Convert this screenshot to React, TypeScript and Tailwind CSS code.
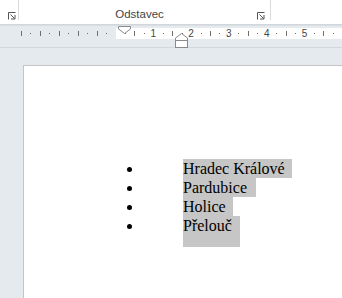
const ZERO = 115.5;
const STEP = 9.45;

const Launcher = () => (
  <svg width="8" height="8" viewBox="0 0 8 8" className="text-[#555]">
    <path d="M0.5 7.5V0.5H7.5" fill="none" stroke="currentColor" strokeWidth="1" />
    <path d="M2.5 2.5L6.5 6.5" fill="none" stroke="currentColor" strokeWidth="1" />
    <path d="M3 7H7V3" fill="none" stroke="currentColor" strokeWidth="1" />
  </svg>
);

const ticks = Array.from({ length: 34 }, (_, i) => i - 10).filter((k) => k !== 0);

const Ruler = () => (
  <div className="relative h-[22px] border-b border-[#d3d8dd]">
    {/* bílý pruh pravítka */}
    <div className="ml-[116px] mt-[2px] h-[11px] bg-white" />
    {ticks.map((k) => {
      const x = ZERO + k * STEP;
      if (k > 0 && k % 4 === 0)
        return (
          <span
            key={k}
            className="absolute top-[1px] -translate-x-1/2 text-[10px] leading-[13px] text-[#444] font-['Liberation_Sans',sans-serif]"
            style={{ left: x }}
          >
            {k / 4}
          </span>
        );
      if (k % 2 === 0)
        return <span key={k} className="absolute top-[5px] h-[5px] w-px bg-[#6d6d6d]" style={{ left: Math.round(x) }} />;
      return <span key={k} className="absolute top-[7px] h-px w-px bg-[#6d6d6d]" style={{ left: Math.round(x) }} />;
    })}
    {/* odsazení prvního řádku */}
    <svg className="absolute left-[118px] top-0" width="14" height="9" viewBox="0 0 14 9">
      <path d="M0.5 0.5H12.5V3L6.5 7.5L0.5 3Z" fill="white" stroke="#8a8a8a" />
    </svg>
    {/* předsazení */}
    <svg className="absolute left-[175px] top-[7px]" width="14" height="16" viewBox="0 0 14 16">
      <path d="M6.5 0.5L12.5 5V7.5H0.5V5Z" fill="white" stroke="#8a8a8a" />
      <rect x="0.5" y="7.5" width="12" height="7" fill="white" stroke="#8a8a8a" />
    </svg>
  </div>
);

const items = [
  { text: "Hradec Králové", w: "w-[109px]", h: "h-[19px]" },
  { text: "Pardubice", w: "w-[73px]", h: "h-[19px]" },
  { text: "Holice", w: "w-[50px]", h: "h-[19px]" },
  { text: "Přelouč", w: "w-[57px]", h: "h-[31px]" },
];

export default function App() {
  return (
    <div className="w-[342px] h-[298px] overflow-hidden bg-[#e5eaee] flex flex-col">
      {/* pás karet */}
      <div className="h-[24px] bg-white flex shrink-0">
        <div className="w-[19px] h-[20px] border-r border-[#dadada] flex items-end pl-[8px]">
          <Launcher />
        </div>
        <div className="w-[252px] h-[20px] border-r border-[#dadada] flex items-end">
          <div className="flex-1 text-center text-[11.5px] leading-[14px] -mb-[1px] text-[#444] font-['Liberation_Sans',sans-serif] pl-[3px]">
            Odstavec
          </div>
          <div className="pr-[5px] flex">
            <Launcher />
          </div>
        </div>
      </div>
      <div className="h-[2px] bg-gradient-to-b from-[#cdd2d7] to-[#dfe4e8] shrink-0" />
      <Ruler />
      {/* stránka */}
      <div className="ml-[23px] mt-[17px] flex-1 bg-white border-l border-t border-[#c4c4c4] pt-[93px]">
        <ul className="flex flex-col font-['Liberation_Serif',serif] text-[16px] leading-[19px] text-black">
          {items.map((it) => (
            <li key={it.text} className={`flex ${it.h}`}>
              <div className="w-[159px] flex justify-end pr-[51px] pt-[8px]">
                <span className="block w-[5px] h-[5px] rounded-full bg-black" />
              </div>
              <div className={`${it.w} h-full bg-[#c6c6c6] whitespace-nowrap`}>{it.text}</div>
            </li>
          ))}
        </ul>
      </div>
    </div>
  );
}
